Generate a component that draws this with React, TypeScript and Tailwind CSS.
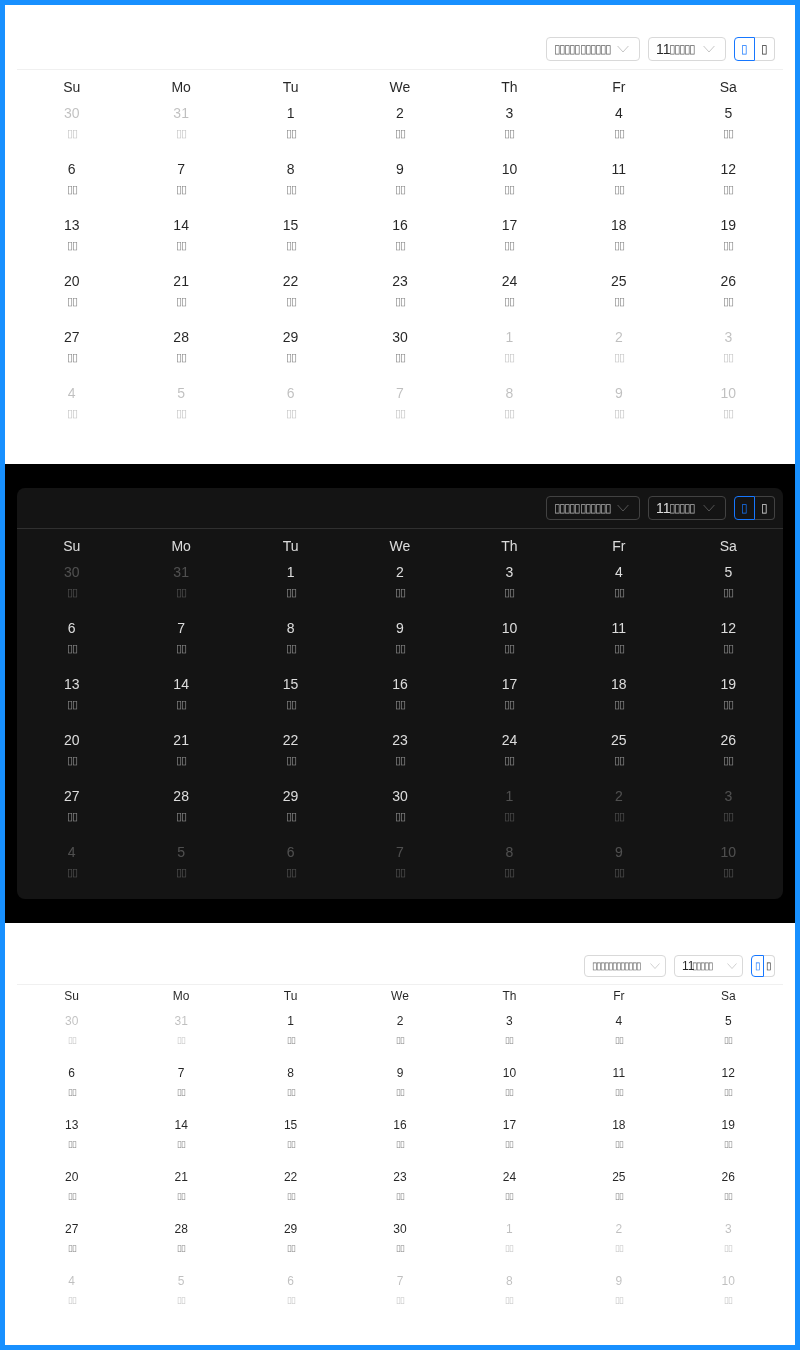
import React from "react";

const T = "\u25AF";
const tofu = (n: number) => T.repeat(n);
const names = ["Su", "Mo", "Tu", "We", "Th", "Fr", "Sa"];
const cells: { d: number; m: boolean }[] = [
  ...[30, 31].map((d) => ({ d, m: true })),
  ...Array.from({ length: 30 }, (_, i) => ({ d: i + 1, m: false })),
  ...Array.from({ length: 10 }, (_, i) => ({ d: i + 1, m: true })),
];

function Chevron({ className }: { className: string }) {
  return (
    <svg viewBox="0 0 12 12" fill="none" stroke="currentColor" strokeWidth="0.9" className={className}>
      <path d="M0.6 3 L6 9 L11.4 3" />
    </svg>
  );
}

function Calendar({ dark, compact }: { dark?: boolean; compact?: boolean }) {
  const line = dark ? "border-[#303030]" : "border-[#f0f0f0]";
  const ctl = dark ? "border-[#424242]" : "border-[#d9d9d9]";
  const text = dark ? "text-[rgba(255,255,255,0.85)]" : "text-[rgba(0,0,0,0.85)]";
  const muted = dark ? "text-[rgba(255,255,255,0.25)]" : "text-[rgba(0,0,0,0.25)]";
  const arrow = dark ? "text-[rgba(255,255,255,0.3)]" : "text-[rgba(0,0,0,0.25)]";
  const ctlTofu = compact ? "text-[10px] tracking-[-2px] opacity-75" : "text-[12px] tracking-[-1.9px] opacity-75";
  return (
    <div className={`rounded-lg will-change-transform ${dark ? "bg-[#141414]" : "bg-white"} ${text}`}>
      <div className={`flex justify-end items-center gap-2 px-2 py-2 border-b ${line} ${compact ? "h-[38px]" : "h-[41px]"}`}>
        <div className={`flex items-center justify-between rounded border ${ctl} pl-[7px] ${compact ? "w-[82px] h-[22px] pr-[5px]" : "w-[94px] h-6 pr-[10px]"}`}>
          <span className={`leading-none ${ctlTofu}`}>{tofu(compact ? 12 : 11)}</span>
          <Chevron className={`shrink-0 ${compact ? "w-[10px] h-[10px]" : "w-3 h-3"} ${arrow}`} />
        </div>
        <div className={`flex items-center justify-between rounded border ${ctl} pl-[7px] ${compact ? "w-[69px] h-[22px] pr-[5px]" : "w-[78px] h-6 pr-[10px]"}`}>
          <span className={`flex items-center leading-none ${compact ? "text-[12px]" : "text-[14px]"}`}>
            11<span className={`-ml-[2px] ${ctlTofu}`}>{tofu(5)}</span>
          </span>
          <Chevron className={`shrink-0 ${compact ? "w-[10px] h-[10px]" : "w-3 h-3"} ${arrow}`} />
        </div>
        <div className={`flex ${compact ? "h-[22px] text-[10px]" : "h-6 text-[12px]"}`}>
          <div className={`flex items-center justify-center rounded-l border border-[#1677ff] text-[#1677ff] ${compact ? "w-[13px]" : "w-[21px]"}`}>{T}</div>
          <div className={`flex items-center justify-center rounded-r border border-l-0 ${ctl} ${compact ? "w-[11px]" : "w-5"}`}>{T}</div>
        </div>
      </div>
      <div className={`grid grid-cols-7 text-center ${compact ? "h-[22px] text-[12px] leading-[22px]" : "h-[31px] text-[14px] leading-[34px]"}`}>
        {names.map((n) => <div key={n}>{n}</div>)}
      </div>
      <div className={`grid grid-cols-7 text-center ${compact ? "pb-[22px]" : "pb-[3px]"}`}>
        {cells.map((c, i) => (
          <div key={i} className={`flex flex-col items-center ${c.m ? muted : ""} ${compact ? "h-[52px] pt-[4px]" : "h-14"}`}>
            <div className={compact ? "text-[12px] leading-5" : "text-[14px] leading-6"}>{c.d}</div>
            <div className={`${compact ? "text-[9px] leading-5 -mt-[1px] tracking-[-1px]" : "text-[11px] leading-5 -mt-[2px] tracking-[-1px]"} ${c.m ? "" : "opacity-60"}`}>{tofu(2)}</div>
          </div>
        ))}
      </div>
    </div>
  );
}

export default function App() {
  return (
    <div className="w-[800px] h-[1350px] border-[5px] border-[#1890ff] bg-white font-['Liberation_Sans',sans-serif]">
      <div className="bg-white px-3 py-6"><Calendar /></div>
      <div className="bg-black px-3 py-6"><Calendar dark /></div>
      <div className="bg-white px-3 pt-6"><Calendar compact /></div>
    </div>
  );
}
